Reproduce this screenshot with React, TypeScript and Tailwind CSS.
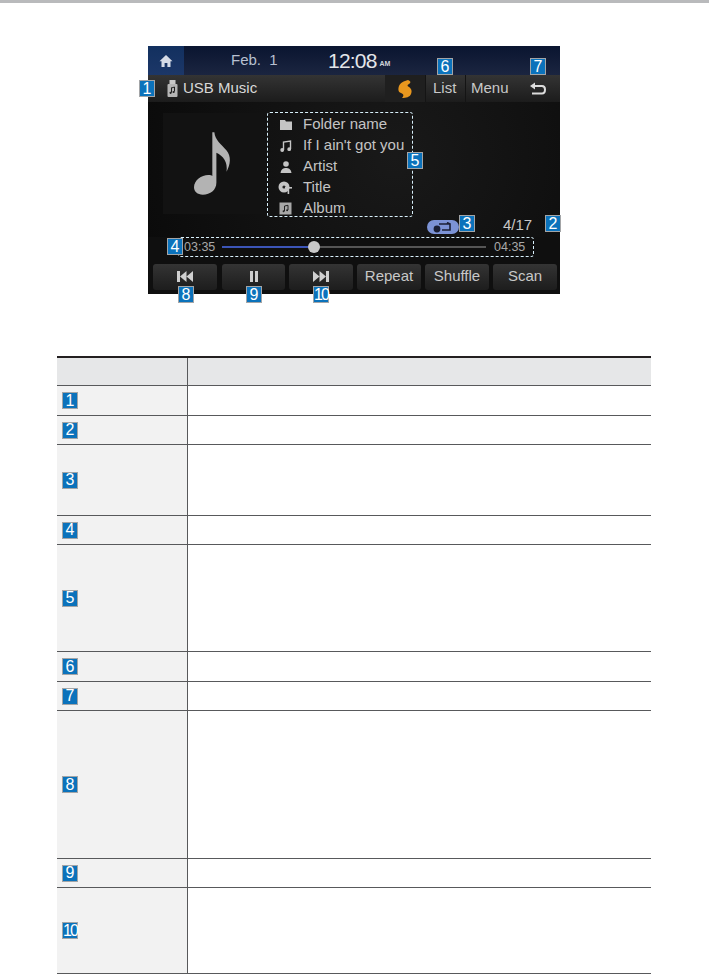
const rows = [
  { n: '1', h: 'h-[30px]' },
  { n: '2', h: 'h-[29px]' },
  { n: '3', h: 'h-[71px]' },
  { n: '4', h: 'h-[29px]' },
  { n: '5', h: 'h-[107px]' },
  { n: '6', h: 'h-[30px]' },
  { n: '7', h: 'h-[29px]' },
  { n: '8', h: 'h-[148px]' },
  { n: '9', h: 'h-[29px]' },
  { n: '10', h: 'h-[86px]' },
];

function Badge({ n, className = '' }: { n: string; className?: string }) {
  return (
    <span
      className={`flex h-[17px] w-[16px] items-center justify-center border border-[#a3a5a7] bg-[#0b72bb] font-['Liberation_Sans',sans-serif] text-[16px] leading-none text-white ${n === '10' ? 'tracking-[-2px]' : ''} ${className}`}
    >
      {n}
    </span>
  );
}

function HomeIcon() {
  return (
    <svg width="14" height="14" viewBox="0 0 14 14" fill="#d5dbe6">
      <path d="M7 1 L13.5 7.2 H11.5 V13 H8.4 V9 H5.6 V13 H2.5 V7.2 H.5 Z" />
    </svg>
  );
}

function UsbIcon() {
  return (
    <svg width="11" height="17" viewBox="0 0 11 17">
      <rect x="2.5" y="0" width="6" height="4" fill="#c9c9c9" />
      <rect x="0.5" y="4" width="10" height="13" rx="1" fill="#b5b5b5" />
      <path d="M4.5 7.5 V12.5 M4.5 8 L7.5 7 V11.5" stroke="#222" strokeWidth="1" fill="none" />
      <circle cx="3.6" cy="12.8" r="1.1" fill="#222" />
      <circle cx="6.6" cy="12" r="1.1" fill="#222" />
    </svg>
  );
}

function FlameIcon() {
  return (
    <svg width="14" height="18" viewBox="0 0 14 18">
      <path d="M10 0 C13 1 13 3 11 4 C9 5 9 6 11 7 C14 9 14 12 13 14 C12 17 8 18 4 18 C6 16 6 14 3 13 C0 12 0 9 1 6 C2 3 6 1 10 0 Z" fill="#e8971e" />
    </svg>
  );
}

function BackIcon() {
  return (
    <svg width="17" height="14" viewBox="0 0 17 14" fill="none">
      <path d="M1 4 L6 0.5 V7.5 Z" fill="#dcdcdc" />
      <path d="M5 4 H13 C15 4 16 5.5 16 7.5 C16 10 15 11.5 13 11.5 H3" stroke="#dcdcdc" strokeWidth="2" />
    </svg>
  );
}

function FolderIcon() {
  return (
    <svg width="12" height="10" viewBox="0 0 12 10" fill="#c4c4c4">
      <path d="M0 0 H5 L6 1.5 H12 V10 H0 Z" />
    </svg>
  );
}

function SongIcon() {
  return (
    <svg width="12" height="12" viewBox="0 0 12 12" fill="none" stroke="#c4c4c4" strokeWidth="1.4">
      <path d="M3.5 10 V2 L10.5 1 V9" />
      <circle cx="2.2" cy="10" r="1.2" fill="#c4c4c4" />
      <circle cx="9.2" cy="9.2" r="1.2" fill="#c4c4c4" />
    </svg>
  );
}

function ArtistIcon() {
  return (
    <svg width="12" height="12" viewBox="0 0 12 12" fill="#c4c4c4">
      <circle cx="6" cy="3" r="2.8" />
      <path d="M0.5 12 C1 8 3.5 7 6 7 C8.5 7 11 8 11.5 12 Z" />
    </svg>
  );
}

function TitleIcon() {
  return (
    <svg width="14" height="14" viewBox="0 0 14 14">
      <circle cx="6" cy="6" r="5.5" fill="#c4c4c4" />
      <circle cx="6" cy="6" r="1.6" fill="#222" />
      <rect x="7" y="6" width="7" height="1.6" fill="#c4c4c4" />
      <rect x="9.6" y="6" width="1.6" height="7" fill="#c4c4c4" />
    </svg>
  );
}

function AlbumIcon() {
  return (
    <svg width="13" height="13" viewBox="0 0 13 13">
      <rect x="0.5" y="0.5" width="12" height="12" fill="#a8a8a8" />
      <path d="M5.5 9 V4 L9 3.3 V8" stroke="#222" fill="none" />
      <circle cx="4.6" cy="9.2" r="1" fill="#222" />
      <circle cx="8.1" cy="8.3" r="1" fill="#222" />
    </svg>
  );
}

function Note() {
  return (
    <svg width="38" height="65" viewBox="0 0 56 92" fill="#b3b3b3">
      <path d="M27 0 H30 C31 12 40 17 48 27 C55 36 54 47 48 58 C50 43 43 35 33 30 V74 C33 85 24 92 13 92 C5 92 0 87 0 81 C0 71 11 63 21 63 C24 63 26 63.5 27 64.5 Z" />
    </svg>
  );
}

function Prev() {
  return (
    <svg width="16" height="11" viewBox="0 0 16 11" fill="#cfcfcf">
      <rect x="0" y="0" width="3" height="11" />
      <path d="M9.5 0 V11 L3 5.5 Z M16 0 V11 L9.5 5.5 Z" />
    </svg>
  );
}

function Next() {
  return (
    <svg width="16" height="11" viewBox="0 0 16 11" fill="#cfcfcf">
      <rect x="13" y="0" width="3" height="11" />
      <path d="M6.5 0 V11 L13 5.5 Z M0 0 V11 L6.5 5.5 Z" />
    </svg>
  );
}

function Pause() {
  return (
    <svg width="8" height="11" viewBox="0 0 8 11" fill="#cfcfcf">
      <rect x="0" width="3" height="11" />
      <rect x="5" width="3" height="11" />
    </svg>
  );
}

function SoftKey({ children, className = 'w-[64px]' }: { children: React.ReactNode; className?: string }) {
  return (
    <div className={`flex h-[26px] items-center justify-center rounded-[3px] bg-gradient-to-b from-[#343434] to-[#1d1d1d] pb-[2px] text-[15px] text-[#c8c8c8] ${className}`}>
      {children}
    </div>
  );
}

const info = [
  { icon: <FolderIcon />, label: 'Folder name' },
  { icon: <SongIcon />, label: "If I ain't got you" },
  { icon: <ArtistIcon />, label: 'Artist' },
  { icon: <TitleIcon />, label: 'Title' },
  { icon: <AlbumIcon />, label: 'Album' },
];

export default function App() {
  return (
    <div className="h-[974px] w-[709px] overflow-hidden bg-white font-['Liberation_Sans',sans-serif]">
      <div className="h-[3px] bg-[#b9babc]" />

      <div className="relative ml-[148px] mt-[43px] flex h-[248px] w-[412px] flex-col bg-[#0f0f0f] text-[#d0d0d0]">
        <div className="flex h-[29px] items-center bg-gradient-to-b from-[#0a1530] to-[#1b2540]">
          <div className="flex h-full w-[36px] items-center justify-center bg-gradient-to-b from-[#12305f] to-[#1c3768]">
            <HomeIcon />
          </div>
          <span className="ml-[47px] w-[97px] text-[15px] text-[#b8c0d0]">Feb.&nbsp;&nbsp;1</span>
          <span className="text-[21px] leading-none tracking-[-0.8px] text-[#e4e6ea]">12:08</span>
          <span className="ml-[3px] mt-[7px] text-[7px] font-bold text-[#d0d4dc]">AM</span>
        </div>

        <div className="flex h-[27px] items-center bg-gradient-to-b from-[#343434] to-[#1c1c1c]">
          <span className="ml-[19px] flex"><UsbIcon /></span>
          <span className="ml-[5px] text-[15px] text-[#d8d8d8]">USB Music</span>
          <div className="ml-auto flex h-full items-center text-[15px] text-[#c8c8c8]">
            <div className="flex h-full w-[40px] items-center justify-center bg-[#1f1f1f]">
              <FlameIcon />
            </div>
            <span className="flex h-full w-[40px] items-center border-l border-[#141414] pl-[7px]">List</span>
            <span className="flex h-full w-[64px] items-center border-l border-[#141414] pl-[5px]">Menu</span>
            <span className="mr-[14px] flex h-full w-[17px] items-center"><BackIcon /></span>
          </div>
        </div>

        <div className="flex h-[135px] items-start bg-[radial-gradient(circle_at_60%_40%,#191919,#0b0b0b)]">
          <div className="ml-[15px] mt-[11px] flex h-[101px] w-[100px] items-center justify-center bg-[#121212]">
            <Note />
          </div>
          <div className="ml-[4px] mt-[10px] flex h-[105px] w-[146px] flex-col overflow-hidden rounded-[3px] border border-dashed border-[#d8effa] pt-[1px] text-[15px] text-[#c4c4c4]">
            {info.map((row) => (
              <div key={row.label} className="flex h-[21px] shrink-0 items-center">
                <span className="flex w-[35px] justify-end pr-[11px]">{row.icon}</span>
                <span className="whitespace-nowrap">{row.label}</span>
              </div>
            ))}
          </div>
          <div className="ml-[14px] mt-[118px] flex h-[14px] w-[32px] items-center justify-center rounded-[7px] bg-[#7c93d6]">
            <svg width="20" height="11" viewBox="0 0 20 11" fill="none" stroke="#1b2036" strokeWidth="1.6">
              <path d="M6 2 H17 V8 H9 M14 0.5 L17 2" />
              <circle cx="4" cy="7" r="2.6" fill="#1b2036" />
            </svg>
          </div>
          <span className="ml-[44px] mt-[114px] text-[15px] leading-[18px] text-[#c8c8c8]">4/17</span>
        </div>

        <div className="flex h-[27px] items-start">
          <div className="ml-[30px] flex h-[20px] w-[356px] items-center rounded-[3px] border border-dashed border-[#d8effa] text-[12.5px] text-[#a8a8a8]">
            <span className="ml-[5px] w-[38px]">03:35</span>
            <div className="relative h-[2px] w-[264px] bg-[#555]">
              <div className="h-full w-[92px] bg-[#3c55b8]" />
              <div className="absolute left-[86px] top-[-5px] h-[12px] w-[12px] rounded-full bg-[#c9c9c9]" />
            </div>
            <span className="ml-[8px]">04:35</span>
          </div>
        </div>

        <div className="flex gap-[4px] pl-[5px]">
          <SoftKey className="mr-[1px] w-[64px]"><Prev /></SoftKey>
          <SoftKey className="w-[63px]"><Pause /></SoftKey>
          <SoftKey><Next /></SoftKey>
          <SoftKey>Repeat</SoftKey>
          <SoftKey>Shuffle</SoftKey>
          <SoftKey>Scan</SoftKey>
        </div>

        <Badge n="1" className="absolute left-[-9px] top-[34px]" />
        <Badge n="6" className="absolute left-[289px] top-[12px]" />
        <Badge n="7" className="absolute left-[382px] top-[12px]" />
        <Badge n="5" className="absolute left-[259px] top-[106px]" />
        <Badge n="3" className="absolute left-[311px] top-[169px]" />
        <Badge n="2" className="absolute left-[397px] top-[169px]" />
        <Badge n="4" className="absolute left-[19px] top-[192px]" />
        <Badge n="8" className="absolute left-[30px] top-[240px]" />
        <Badge n="9" className="absolute left-[98px] top-[240px]" />
        <Badge n="10" className="absolute left-[165px] top-[240px]" />
      </div>

      <div className="ml-[57px] mt-[62px] w-[594px] border-t-2 border-[#231f20]">
        <div className="flex h-[27px] bg-[#e6e7e8]">
          <div className="w-[131px] border-r border-[#58595b]" />
        </div>
        {rows.map((row) => (
          <div key={row.n} className={`flex border-t border-[#58595b] ${row.h}`}>
            <div className="flex w-[131px] items-center border-r border-[#58595b] bg-[#f2f2f2] pl-[5px]">
              <Badge n={row.n} />
            </div>
          </div>
        ))}
        <div className="h-px bg-[#58595b]" />
      </div>
    </div>
  );
}
